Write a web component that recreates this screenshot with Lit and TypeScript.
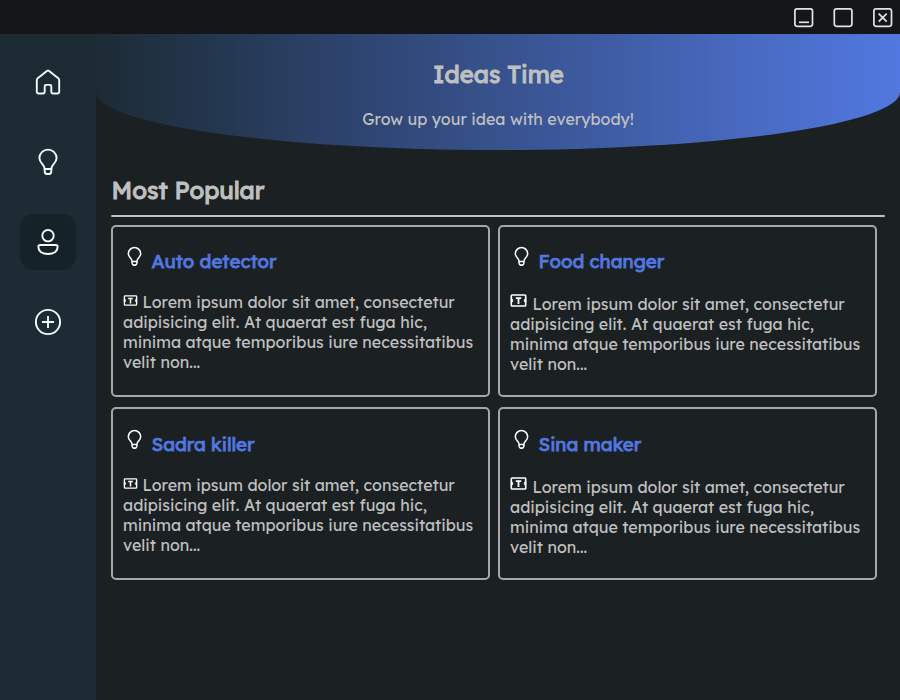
import { LitElement, html, svg, css } from "lit";
import { customElement, property } from "lit/decorators.js";

const bulb = svg`<path d="M12.3 21.2C12 19 7.4 16.6 7.4 12A8.6 8.4 0 0 1 24.6 12C24.6 16.6 20 19 19.7 21.2L19.2 26Q18.9 28 17 28H15Q13.1 28 12.8 26ZM12.4 23H19.6"/>`;

const icons: Record<string, unknown> = {
  home: svg`<path d="M14.9 4.9Q16 4 17.1 4.9L26.3 12.3Q27.2 13 27.2 14.2V26Q27.2 27.5 25.7 27.5H20.8Q19.3 27.5 19.3 26V20.3Q19.3 18.9 17.9 18.9H14.1Q12.7 18.9 12.7 20.3V26Q12.7 27.5 11.2 27.5H6.3Q4.8 27.5 4.8 26V14.2Q4.8 13 5.7 12.3Z"/>`,
  bulb,
  user: svg`<circle cx="16" cy="9.7" r="5.7"/><path d="M8.2 19H23.8Q25.6 19 25.6 20.8C25.6 25.5 21.5 28 16 28S6.4 25.5 6.4 20.8Q6.4 19 8.2 19Z"/>`,
  plus: svg`<circle cx="16" cy="16" r="12.1"/><path d="M16 10V22M10 16H22"/>`,
};

interface Idea {
  title: string;
  large: boolean;
}

const ideas: Idea[] = [
  { title: "Auto detector", large: false },
  { title: "Food changer", large: true },
  { title: "Sadra killer", large: false },
  { title: "Sina maker", large: true },
];

@customElement("idea-card")
class IdeaCard extends LitElement {
  @property() heading = "";
  @property({ type: Boolean, reflect: true }) large = false;

  static styles = css`
    :host {
      display: block;
      box-sizing: border-box;
      height: 172.6px;
      border: 2px solid #a5a8aa;
      border-radius: 5px;
      padding: 18.3px 10px 0;
      color: #c0c0c0;
    }
    .title { display: flex; height: 32px; }
    .bulb { width: 23px; height: 23px; flex: none; fill: none; stroke: #fff; stroke-width: 2.1; margin-right: 5.5px; }
    h3 { margin: 4px 0 0; font-size: 18.72px; line-height: 24px; font-weight: 400; -webkit-text-stroke: 0.75px currentColor; color: #5278e0; white-space: nowrap; }
    .text { margin-top: 15px; font-size: 16px; line-height: 20px; white-space: nowrap; }
    :host([large]) .text { margin-top: 17px; }
    .row { display: flex; }
    .tag { width: 15px; height: 11px; margin: 3px 4.5px 0 0; fill: none; stroke: #fff; flex: none; }
    :host([large]) .tag { width: 17px; height: 13px; margin-top: 0; margin-right: 5.5px; }
  `;

  render() {
    return html`
      <div class="title">
        <svg class="bulb" viewBox="0 0 32 32">${bulb}</svg>
        <h3>${this.heading}</h3>
      </div>
      <div class="text">
        <div class="row">
          <svg class="tag" viewBox="0 0 17 13">
            <rect x="1.3" y="1" width="14.4" height="11" rx="0.8" stroke-width="1.6" />
            <path d="M1 4.6A1.9 1.9 0 0 1 1 8.4ZM16 4.6A1.9 1.9 0 0 0 16 8.4Z" fill="#fff" stroke="#fff" stroke-width="0.5" />
            <path stroke-width="1.8" d="M5.8 4.2H11.2M8.5 4.2V10" />
          </svg>
          <span>Lorem ipsum dolor sit amet, consectetur</span>
        </div>
        <div>adipisicing elit. At quaerat est fuga hic,</div>
        <div>minima atque temporibus iure necessitatibus</div>
        <div>velit non...</div>
      </div>
    `;
  }
}

@customElement("app-root")
class AppRoot extends LitElement {
  static styles = css`
    :host {
      display: flex;
      flex-direction: column;
      height: 700px;
      background: #1b2023;
      color: #c0c0c0;
      font-family: Lexend, "Noto Sans", sans-serif;
      overflow: hidden;
    }
    .titlebar { height: 34px; flex: none; box-sizing: border-box; background: #141619; display: flex; justify-content: flex-end; align-items: center; gap: 19.5px; padding: 1px 7.5px 0 0; }
    .titlebar svg { width: 20px; height: 20px; fill: none; stroke: #e4e4e4; stroke-width: 1.7; }
    .body { flex: 1; display: flex; min-height: 0; }
    nav { width: 96px; flex: none; background: #1c2b34; display: flex; flex-direction: column; align-items: center; gap: 24px; padding-top: 20px; box-sizing: border-box; }
    .item { width: 56px; height: 56px; border-radius: 14px; display: flex; align-items: center; justify-content: center; }
    .active { background: #152329; }
    .item svg { width: 32px; height: 32px; fill: none; stroke: #f2fbff; stroke-width: 1.9; }
    main { flex: 1; }
    header { height: 116px; box-sizing: border-box; padding-top: 24px; text-align: center; border-radius: 0 0 50% 50%; background: linear-gradient(90deg, #1c2b34, #2e4571 33%, #5278e0); }
    h1, h2 { margin: 0; font-size: 24px; line-height: 32px; font-weight: 400; -webkit-text-stroke: 0.95px currentColor; }
    h1 { padding-left: 1px; }
    h2 { padding-left: 0.5px; }
    p { margin: 19px 0 0; font-size: 16px; line-height: 20px; }
    section { padding: 24px 15px 0; }
    .rule { height: 2px; margin-top: 9px; border-radius: 1px; background: #bfc3c4; }
    .grid { display: grid; grid-template-columns: 379px 379px; gap: 10px 8px; margin-top: 7.8px; }
  `;

  render() {
    return html`
      <div class="titlebar">
        <svg viewBox="0 0 20 20"><rect x="0.9" y="0.9" width="17.6" height="17.4" rx="2.2"/><path d="M5 14.3H15"/></svg>
        <svg viewBox="0 0 20 20"><rect x="1.3" y="0.9" width="17.6" height="17.4" rx="2.2"/></svg>
        <svg viewBox="0 0 20 20"><rect x="0.9" y="0.9" width="17.6" height="17.4" rx="2.2"/><path d="M5.7 5.6L13.7 13.6M13.7 5.6L5.7 13.6"/></svg>
      </div>
      <div class="body">
        <nav>
          ${Object.keys(icons).map(
            (name) => html`<div class="item ${name === "user" ? "active" : ""}"><svg viewBox="0 0 32 32">${icons[name]}</svg></div>`
          )}
        </nav>
        <main>
          <header>
            <h1>Ideas Time</h1>
            <p>Grow up your idea with everybody!</p>
          </header>
          <section>
            <h2>Most Popular</h2>
            <div class="rule"></div>
            <div class="grid">
              ${ideas.map((i) => html`<idea-card .heading=${i.title} ?large=${i.large}></idea-card>`)}
            </div>
          </section>
        </main>
      </div>
    `;
  }
}
